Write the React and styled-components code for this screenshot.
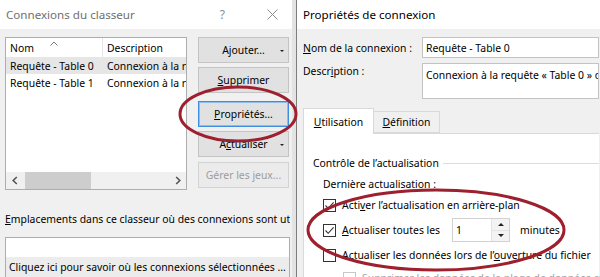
import React from 'react';
import styled, { createGlobalStyle } from 'styled-components';

const GlobalStyle = createGlobalStyle`
  html, body { margin: 0; padding: 0; background: #fff; }
  body {
    font-family: "Noto Sans", "DejaVu Sans", sans-serif;
    font-size: 10.4px;
    color: #000;
  }
  * { box-sizing: border-box; }
`;

const Screen = styled.div`
  position: relative;
  width: 600px;
  height: 277px;
  overflow: hidden;
  display: flex;
`;

const Dialog = styled.section`
  display: flex;
  flex-direction: column;
  background: #f0f0f0;
  ${p => (p.$width ? `width: ${p.$width}px; flex: none;` : 'flex: 1; min-width: 0;')}
`;

const Seam = styled.div`
  width: 5px;
  flex: none;
  background: #e3e3e3;
  border-right: 1px solid #7d7d7d;
`;

const TitleBar = styled.header`
  height: 29px;
  flex: none;
  background: #fff;
  display: flex;
  align-items: center;
  padding: 0 14px 0 6px;
  font-size: 11.6px;
  color: ${p => (p.$inactive ? '#6f6f6f' : '#000')};
  white-space: nowrap;
`;

const TitleText = styled.span`
  flex: 1;
`;

const HelpGlyph = styled.span`
  color: #8a8a8a;
  font-size: 12px;
  margin-right: 42px;
`;

const Key = styled.u`
  text-decoration: underline;
  text-underline-offset: 1px;
`;

/* ---------- left dialog ---------- */
const LeftBody = styled.div`
  flex: 1;
  display: flex;
  flex-direction: column;
  padding: 8px 2px 0 5px;
`;

const TopRow = styled.div`
  display: flex;
  gap: 11px;
`;

const ListBox = styled.div`
  width: 182px;
  height: 153px;
  flex: none;
  background: #fff;
  border: 1px solid #adadad;
  display: flex;
  flex-direction: column;
  overflow: hidden;
`;

const ListGrid = styled.div`
  display: grid;
  grid-template-columns: 97px 1fr;
  height: ${p => p.$h}px;
  align-items: center;
  white-space: nowrap;
  background: ${p => (p.$selected ? '#e6e6e6' : 'transparent')};
`;

const HeadCell = styled.div`
  position: relative;
  height: 100%;
  display: flex;
  align-items: center;
  padding-left: 4px;
  border-right: ${p => (p.$divider ? '1px solid #e5e5e5' : 'none')};
`;

const SortCaret = styled.svg`
  position: absolute;
  top: 3px;
  left: 50%;
  transform: translateX(-50%);
`;

const Cell = styled.div`
  padding-left: 4px;
  overflow: hidden;
`;

const Filler = styled.div`
  flex: 1;
`;

const ScrollBar = styled.div`
  height: 17px;
  flex: none;
  display: flex;
  align-items: center;
  background: #f0f0f0;
`;

const ScrollArrow = styled.div`
  width: 17px;
  height: 17px;
  display: flex;
  align-items: center;
  justify-content: center;
  flex: none;
`;

const Thumb = styled.div`
  width: 66px;
  height: 17px;
  margin-left: 2px;
  background: #cdcdcd;
`;

const ButtonColumn = styled.div`
  width: 91px;
  flex: none;
  display: flex;
  flex-direction: column;
`;

const PushButton = styled.div`
  position: relative;
  height: 26px;
  margin-top: ${p => p.$mt || 0}px;
  display: flex;
  align-items: center;
  justify-content: center;
  background: ${p => (p.$disabled ? '#ebebeb' : '#e1e1e1')};
  border: 1px solid ${p => (p.$focused ? '#3d8ee0' : p.$disabled ? '#d3d3d3' : '#c4c4c4')};
  box-shadow: ${p => (p.$focused ? 'inset 0 0 0 1px #8fbdea' : 'none')};
  color: ${p => (p.$disabled ? '#9c9c9c' : '#000')};
  white-space: nowrap;
`;

const DropMark = styled.span`
  position: absolute;
  right: 4px;
  top: 12px;
  width: 0;
  height: 0;
  border-left: 2px solid transparent;
  border-right: 2px solid transparent;
  border-top: 2px solid #222;
`;

const FieldCaption = styled.div`
  margin-top: 21px;
  line-height: 16px;
  white-space: nowrap;
  overflow: hidden;
`;

const LocationsBox = styled.div`
  margin-top: 10px;
  width: 285px;
  flex: 1;
  background: #fff;
  border: 1px solid #adadad;
  padding-top: 19px;
`;

const LocationRow = styled.div`
  height: 20px;
  display: flex;
  align-items: center;
  padding-left: 3px;
  background: #ececec;
  white-space: nowrap;
  overflow: hidden;
`;

/* ---------- right dialog ---------- */
const RightBody = styled.div`
  flex: 1;
  display: flex;
  flex-direction: column;
  padding: 8px 1px 0 6px;
  min-height: 0;
`;

const FormGrid = styled.div`
  display: grid;
  grid-template-columns: 119px 1fr;
  row-gap: 5px;
`;

const FormLabel = styled.div`
  line-height: 16px;
  white-space: nowrap;
  align-self: ${p => (p.$top ? 'start' : 'center')};
`;

const TextBox = styled.div`
  height: ${p => p.$h}px;
  background: #fff;
  border: 1px solid #c3c3c3;
  padding: ${p => (p.$multi ? '3px 3px 0' : '0 3px')};
  display: flex;
  align-items: ${p => (p.$multi ? 'flex-start' : 'center')};
  white-space: nowrap;
  overflow: hidden;
  line-height: 16px;
`;

const TabStrip = styled.div`
  margin-top: 9px;
  display: flex;
  align-items: flex-end;
  position: relative;
  z-index: 1;
`;

const Tab = styled.div`
  width: ${p => p.$w}px;
  height: ${p => (p.$active ? 26 : 22)}px;
  margin-bottom: ${p => (p.$active ? -1 : 0)}px;
  display: flex;
  align-items: center;
  justify-content: center;
  background: ${p => (p.$active ? '#fff' : '#f0f0f0')};
  border: 1px solid #d9d9d9;
  border-bottom: ${p => (p.$active ? 'none' : '1px solid #d9d9d9')};
  border-left: ${p => (p.$active ? '1px solid #d9d9d9' : 'none')};
`;

const TabPanel = styled.div`
  flex: 1;
  background: #fff;
  border-top: 1px solid #d9d9d9;
  border-left: 1px solid #d9d9d9;
  padding: 21px 0 0 9px;
`;

const GroupTitle = styled.div`
  display: flex;
  align-items: center;
  gap: 4px;
  line-height: 16px;
  white-space: nowrap;
`;

const GroupRule = styled.div`
  flex: 1;
  height: 1px;
  background: #dcdcdc;
`;

const GroupContent = styled.div`
  padding: 5px 0 0 10px;
  display: flex;
  flex-direction: column;
  gap: 3px;
`;

const PlainLine = styled.div`
  line-height: 16px;
  white-space: nowrap;
`;

const CheckRow = styled.div`
  height: ${p => p.$h || 20}px;
  margin-left: ${p => p.$indent || 0}px;
  display: flex;
  align-items: center;
  white-space: nowrap;
  color: ${p => (p.$disabled ? '#a3a3a3' : '#000')};
`;

const Box = styled.span`
  width: 13px;
  height: 13px;
  flex: none;
  border: 1px solid ${p => (p.$disabled ? '#c8c8c8' : '#333')};
  background: #fff;
  display: flex;
  align-items: center;
  justify-content: center;
  margin-right: 6px;
`;

const CheckLabel = styled.span`
  ${p => (p.$width ? `width: ${p.$width}px; flex: none;` : '')}
`;

const SpinBox = styled.div`
  width: 58px;
  height: 24px;
  flex: none;
  display: flex;
  background: #fff;
  border: 1px solid #d2d2d2;
`;

const SpinValue = styled.div`
  flex: 1;
  display: flex;
  align-items: center;
  padding-left: 3px;
`;

const SpinButtons = styled.div`
  width: 18px;
  display: flex;
  flex-direction: column;
  border-left: 1px solid #e3e3e3;
`;

const SpinButton = styled.div`
  flex: 1;
  display: flex;
  align-items: center;
  justify-content: center;
  background: #f3f3f3;
  & + & { border-top: 1px solid #e3e3e3; }
`;

const Arrow = styled.span`
  width: 0;
  height: 0;
  border-left: 3px solid transparent;
  border-right: 3px solid transparent;
  ${p => (p.$up ? 'border-bottom: 3px solid #222;' : 'border-top: 3px solid #222;')}
`;

const Suffix = styled.span`
  margin-left: 10px;
`;

const Marks = styled.svg`
  position: absolute;
  inset: 0;
  pointer-events: none;
`;

const Tick = () => (
  <svg width="11" height="11" viewBox="0 0 11 11">
    <polyline points="1.5,5.5 4.2,8.3 9.6,2.4" fill="none" stroke="#333" strokeWidth="1.1" />
  </svg>
);

const Chevron = ({ dir }) => (
  <svg width="6" height="9" viewBox="0 0 6 9">
    <polyline
      points={dir === 'left' ? '4.8,1 1.2,4.5 4.8,8' : '1.2,1 4.8,4.5 1.2,8'}
      fill="none"
      stroke="#555"
      strokeWidth="1.6"
    />
  </svg>
);

const CloseIcon = () => (
  <svg width="11" height="11" viewBox="0 0 11 11">
    <path d="M0.5 0.5 L10.5 10.5 M10.5 0.5 L0.5 10.5" stroke="#8a8a8a" strokeWidth="1" />
  </svg>
);

const connections = [
  { name: 'Requête - Table 0', desc: 'Connexion à la requête « Table 0 »', selected: true },
  { name: 'Requête - Table 1', desc: 'Connexion à la requête « Table 1 »', selected: false },
];

export default function App() {
  return (
    <>
      <GlobalStyle />
      <Screen>
        <Dialog $width={292}>
          <TitleBar $inactive>
            <TitleText>Connexions du classeur</TitleText>
            <HelpGlyph>?</HelpGlyph>
            <CloseIcon />
          </TitleBar>
          <LeftBody>
            <TopRow>
              <ListBox>
                <ListGrid $h={19}>
                  <HeadCell $divider>
                    Nom
                    <SortCaret width="8" height="5" viewBox="0 0 8 5">
                      <polyline points="0.5,4.5 4,1 7.5,4.5" fill="none" stroke="#777" strokeWidth="1" />
                    </SortCaret>
                  </HeadCell>
                  <HeadCell>Description</HeadCell>
                </ListGrid>
                {connections.map(c => (
                  <ListGrid key={c.name} $h={17} $selected={c.selected}>
                    <Cell>{c.name}</Cell>
                    <Cell>{c.desc}</Cell>
                  </ListGrid>
                ))}
                <Filler />
                <ScrollBar>
                  <ScrollArrow><Chevron dir="left" /></ScrollArrow>
                  <Thumb />
                  <Filler />
                  <ScrollArrow><Chevron dir="right" /></ScrollArrow>
                </ScrollBar>
              </ListBox>
              <ButtonColumn>
                <PushButton>Ajouter...<DropMark /></PushButton>
                <PushButton $mt={4}><span><Key>S</Key>upprimer</span></PushButton>
                <PushButton $mt={8} $focused><span><Key>P</Key>ropriétés...</span></PushButton>
                <PushButton $mt={4}><span>A<Key>c</Key>tualiser</span><DropMark /></PushButton>
                <PushButton $mt={5} $disabled>Gérer les jeux...</PushButton>
              </ButtonColumn>
            </TopRow>
            <FieldCaption>
              <Key>E</Key>mplacements dans ce classeur où des connexions sont utilisées :
            </FieldCaption>
            <LocationsBox>
              <LocationRow>Cliquez ici pour savoir où les connexions sélectionnées ...</LocationRow>
            </LocationsBox>
          </LeftBody>
        </Dialog>

        <Seam />

        <Dialog>
          <TitleBar>
            <TitleText>Propriétés de connexion</TitleText>
          </TitleBar>
          <RightBody>
            <FormGrid>
              <FormLabel><Key>N</Key>om de la connexion :</FormLabel>
              <TextBox $h={21}>Requête - Table 0</TextBox>
              <FormLabel $top>Descr<Key>i</Key>ption :</FormLabel>
              <TextBox $h={36} $multi>Connexion à la requête « Table 0 » dans le classeur.</TextBox>
            </FormGrid>
            <TabStrip>
              <Tab $w={71} $active><span><Key>U</Key>tilisation</span></Tab>
              <Tab $w={66}><span><Key>D</Key>éfinition</span></Tab>
            </TabStrip>
            <TabPanel>
              <GroupTitle>
                Contrôle de l’actualisation
                <GroupRule />
              </GroupTitle>
              <GroupContent>
                <PlainLine>Dernière actualisation :</PlainLine>
                <CheckRow>
                  <Box><Tick /></Box>
                  <CheckLabel>Acti<Key>v</Key>er l’actualisation en arrière-plan</CheckLabel>
                </CheckRow>
                <CheckRow $h={24}>
                  <Box><Tick /></Box>
                  <CheckLabel $width={110}><Key>A</Key>ctualiser toutes les</CheckLabel>
                  <SpinBox>
                    <SpinValue>1</SpinValue>
                    <SpinButtons>
                      <SpinButton><Arrow $up /></SpinButton>
                      <SpinButton><Arrow /></SpinButton>
                    </SpinButtons>
                  </SpinBox>
                  <Suffix>minutes</Suffix>
                </CheckRow>
                <CheckRow>
                  <Box />
                  <CheckLabel>Actualiser les données lors de l’<Key>o</Key>uverture du fichier</CheckLabel>
                </CheckRow>
                <CheckRow $indent={20} $disabled>
                  <Box $disabled />
                  <CheckLabel>Supprimer les données de la plage de données externe avant d’enregistrer</CheckLabel>
                </CheckRow>
              </GroupContent>
            </TabPanel>
          </RightBody>
        </Dialog>

        <Marks width="600" height="277" viewBox="0 0 600 277">
          <ellipse cx="238" cy="114" rx="58" ry="27" fill="none" stroke="#9e1f2e" strokeWidth="3" />
          <ellipse cx="436" cy="230" rx="128" ry="40" fill="none" stroke="#9e1f2e" strokeWidth="3" />
        </Marks>
      </Screen>
    </>
  );
}
